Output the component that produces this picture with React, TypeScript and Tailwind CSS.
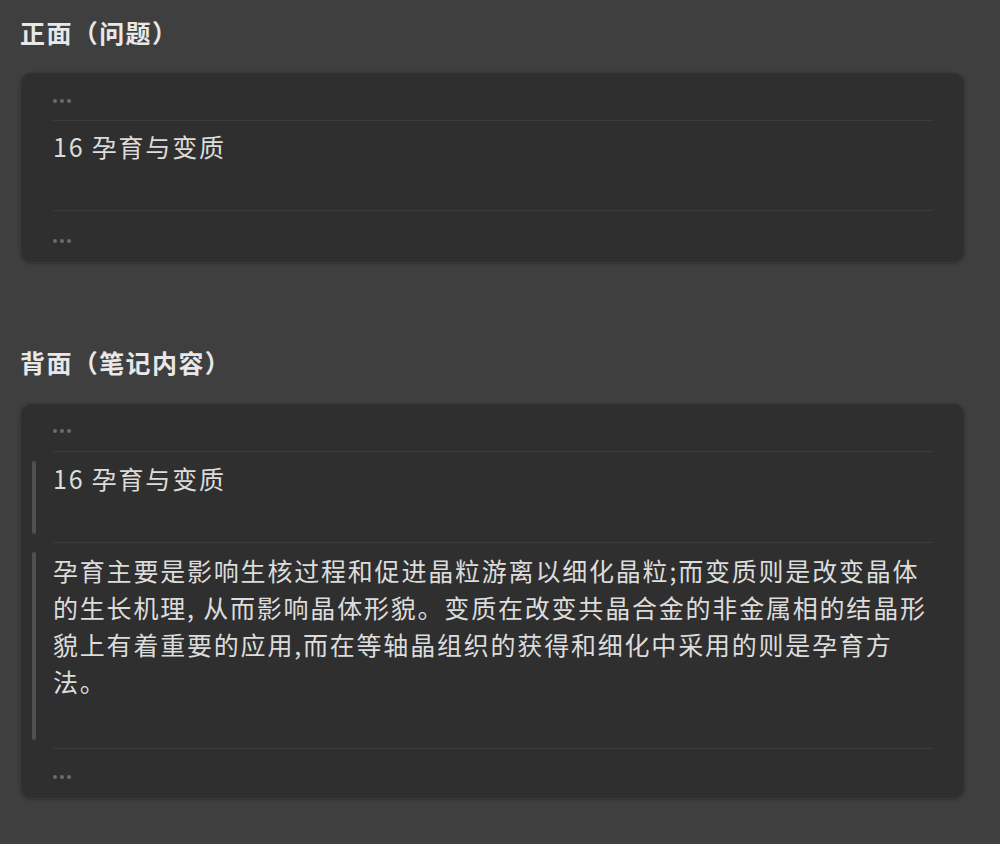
import React from 'react';

const font = { fontFamily: '"Noto Sans CJK SC", "Noto Sans", sans-serif' };

function Dots() {
  return (
    <div className="flex items-center gap-[3px]">
      <span className="w-[4px] h-[4px] rounded-full bg-[#6c6c6c]" />
      <span className="w-[4px] h-[4px] rounded-full bg-[#6c6c6c]" />
      <span className="w-[4px] h-[4px] rounded-full bg-[#6c6c6c]" />
    </div>
  );
}

function Block({ bar, children, height, last }: { bar?: boolean; children: React.ReactNode; height: string; last?: boolean }) {
  return (
    <div className="flex">
      <div className="w-[4px] py-[9px] shrink-0">
        {bar && <div className="h-full w-[4px] rounded-full bg-[#505050]" />}
      </div>
      <div className={`flex-1 ml-[17px] ${height} ${last ? '' : 'border-b border-[#3b3b3b]'}`}>
        {children}
      </div>
    </div>
  );
}

export default function App() {
  return (
    <div className="w-[1000px] h-[844px] bg-[#3f3f3f] pl-[20px] pr-[35px] pt-[14px] overflow-hidden" style={font}>
      <h2 className="text-[25px] font-bold tracking-[1.4px] text-[#e8e8e8] leading-[36px]">正面（问题）</h2>

      <div className="mt-[22px] rounded-[12px] bg-[#2f2f2f] border border-[#3a3a3a] shadow-[0_1px_3px_rgba(0,0,0,0.25)] pl-[11px] pr-[31px]">
        <div className="flex">
          <div className="w-[4px]" />
          <div className="flex-1 ml-[17px] h-[48px] pt-[26px] border-b border-[#3b3b3b]">
            <Dots />
          </div>
        </div>
        <Block height="h-[90px]">
          <p className="pt-[7px] text-[25px] tracking-[1.8px] leading-[37px] text-[#dcdcdc]">16 孕育与变质</p>
        </Block>
        <Block height="h-[51px]" last>
          <div className="pt-[28px]">
            <Dots />
          </div>
        </Block>
      </div>

      <h2 className="mt-[81px] text-[25px] font-bold tracking-[1.4px] text-[#e8e8e8] leading-[36px]">背面（笔记内容）</h2>

      <div className="mt-[23px] rounded-[12px] bg-[#2f2f2f] border border-[#3a3a3a] shadow-[0_1px_3px_rgba(0,0,0,0.25)] pl-[11px] pr-[31px]">
        <div className="flex">
          <div className="w-[4px]" />
          <div className="flex-1 ml-[17px] h-[48px] pt-[25px] border-b border-[#3b3b3b]">
            <Dots />
          </div>
        </div>
        <Block bar height="h-[91px]">
          <p className="pt-[8px] text-[25px] tracking-[1.8px] leading-[37px] text-[#dcdcdc]">16 孕育与变质</p>
        </Block>
        <Block bar height="h-[206px]">
          <p className="pt-[9px] text-[25px] tracking-[1.8px] leading-[37px] text-[#dcdcdc]">
            孕育主要是影响生核过程和促进晶粒游离以细化晶粒;而变质则是改变晶体的生长机理, 从而影响晶体形貌。变质在改变共晶合金的非金属相的结晶形貌上有着重要的应用,而在等轴晶组织的获得和细化中采用的则是孕育方法。
          </p>
        </Block>
        <Block height="h-[49px]" last>
          <div className="pt-[26px]">
            <Dots />
          </div>
        </Block>
      </div>
    </div>
  );
}
